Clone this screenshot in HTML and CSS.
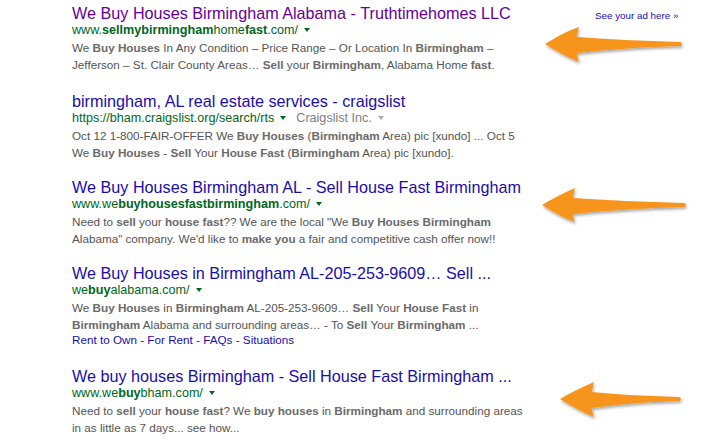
FILE: index.html
```html
<!DOCTYPE html>
<html>
<head>
<meta charset="utf-8">
<link rel="stylesheet" href="styles.css">
</head>
<body>
<div class="page">
  <div class="results">
    <div class="result">
      <div class="title visited">We Buy Houses Birmingham Alabama - Truthtimehomes LLC</div>
      <div class="url">www.<b>sellmybirmingham</b>home<b>fast</b>.com/<span class="caret"></span></div>
      <div class="snippet">We <b>Buy Houses</b> In Any Condition – Price Range – Or Location In <b>Birmingham</b> –<br>Jefferson – St. Clair County Areas… <b>Sell</b> your <b>Birmingham</b>, Alabama Home <b>fast</b>.</div>
    </div>
    <div class="result">
      <div class="title">birmingham, AL real estate services - craigslist</div>
      <div class="url">https://bham.craigslist.org/search/rts<span class="caret"></span><span class="owner">Craigslist Inc.</span><span class="caret grey"></span></div>
      <div class="snippet">Oct 12 1-800-FAIR-OFFER We <b>Buy Houses</b> (<b>Birmingham</b> Area) pic [xundo] ... Oct 5<br>We <b>Buy Houses</b> - <b>Sell</b> Your <b>House Fast</b> (<b>Birmingham</b> Area) pic [xundo].</div>
    </div>
    <div class="result">
      <div class="title">We Buy Houses Birmingham AL - Sell House Fast Birmingham</div>
      <div class="url">www.we<b>buyhousesfastbirmingham</b>.com/<span class="caret"></span></div>
      <div class="snippet">Need to <b>sell</b> your <b>house fast</b>?? We are the local "We <b>Buy Houses Birmingham</b><br>Alabama" company. We'd like to <b>make you</b> a fair and competitive cash offer now!!</div>
    </div>
    <div class="result with-links">
      <div class="title">We Buy Houses in Birmingham AL-205-253-9609… Sell ...</div>
      <div class="url">we<b>buy</b>alabama.com/<span class="caret"></span></div>
      <div class="snippet">We <b>Buy Houses</b> in <b>Birmingham</b> AL-205-253-9609… <b>Sell</b> Your <b>House Fast</b> in<br><b>Birmingham</b> Alabama and surrounding areas… - To <b>Sell</b> Your <b>Birmingham</b> ...</div>
      <div class="sitelinks"><span>Rent to Own</span> - <span>For Rent</span> - <span>FAQs</span> - <span>Situations</span></div>
    </div>
    <div class="result">
      <div class="title">We buy houses Birmingham - Sell House Fast Birmingham ...</div>
      <div class="url">www.we<b>buy</b>bham.com/<span class="caret"></span></div>
      <div class="snippet">Need to <b>sell</b> your <b>house fast</b>? We <b>buy houses</b> in <b>Birmingham</b> and surrounding areas<br>in as little as 7 days... see how...</div>
    </div>
  </div>
  <div class="ad-link">See your ad here »</div>

  <svg class="arrow a1" width="150" height="50" viewBox="0 0 150 50">
    <path filter="url(#sh)" fill="#f7941d" d="M2 19 C12 13 24 6 36 2 C35 6 34 9 34 12 C60 14 100 16 137 17 C139.5 17.5 139.5 20.5 137 21 C100 22 60 25 34 28 C34 31 35 34 36 37 C24 32 12 25 2 19 Z"/>
  </svg>
  <svg class="arrow a2" width="160" height="50" viewBox="0 0 160 50">
    <path filter="url(#sh)" fill="#f7941d" d="M2 18 C12 12 23 6 35 1 C34 5 33 8 33 11 C62 13 105 15 144 16 C146.5 16.5 146.5 19.5 144 20 C105 21 62 24 33 27 C33 30 34 33 35 35 C23 31 12 24 2 18 Z"/>
  </svg>
  <svg class="arrow a3" width="140" height="50" viewBox="0 0 140 50">
    <path filter="url(#sh)" fill="#f7941d" d="M2 18 C12 12 24 6 36 1 C35 5 34 8 34 11 C55 13 85 15 121 16 C123.5 16.5 123.5 19.5 121 20 C85 21 55 24 34 27 C34 30 35 33 36 36 C24 31 12 24 2 18 Z"/>
  </svg>

  <svg width="0" height="0" class="defs">
    <defs>
      <filter id="sh" x="-20%" y="-40%" width="140%" height="180%">
        <feDropShadow dx="1" dy="2" stdDeviation="1.6" flood-color="#000" flood-opacity="0.35"/>
      </filter>
    </defs>
  </svg>
</div>
</body>
</html>
```
FILE: styles.css
```css
html, body { margin: 0; padding: 0; background: #fff; }
body { font-family: Arial, "Liberation Sans", sans-serif; }
.page { position: relative; width: 728px; height: 443px; overflow: hidden; }
.results { padding: 4px 0 0 72px; }
.result { margin-bottom: 17px; }
.result:first-child { margin-bottom: 19px; }
.result.with-links { margin-bottom: 20px; }
.title { font-size: 16.2px; line-height: 18px; color: #1a0dab; white-space: nowrap; }
.title.visited { color: #609; }
.url { font-size: 12.6px; line-height: 16px; color: #006621; white-space: nowrap; }
.url b { font-weight: bold; }
.caret { display: inline-block; width: 0; height: 0; border-left: 3px solid transparent; border-right: 3px solid transparent; border-top: 4px solid #006621; margin: 0 0 2px 6px; vertical-align: middle; }
.caret.grey { border-top-color: #aaa; }
.owner { color: #808080; margin-left: 10px; }
.snippet { margin-top: 1px; font-size: 11.7px; line-height: 17px; color: #545454; white-space: nowrap; }
.snippet b { color: #6a6a6a; }
.sitelinks { font-size: 11.7px; line-height: 14px; color: #1a0dab; white-space: nowrap; }
.ad-link { position: absolute; left: 595px; top: 10px; font-size: 9.8px; color: #1a0dab; }
.arrow { position: absolute; overflow: visible; }
.a1 { left: 543px; top: 25px; }
.a2 { left: 540px; top: 187px; }
.a3 { left: 558px; top: 381px; }
.defs { position: absolute; }
```
